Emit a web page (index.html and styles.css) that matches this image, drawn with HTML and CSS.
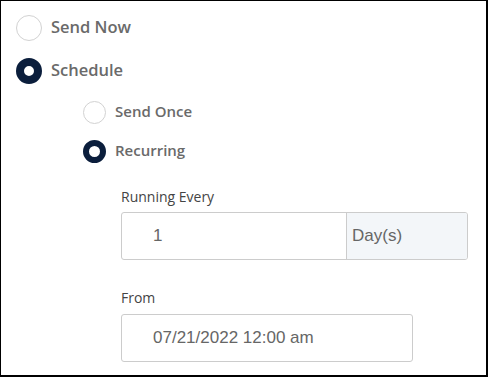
FILE: index.html
```html
<!DOCTYPE html>
<html lang="en">
<head>
<meta charset="utf-8">
<title>Schedule</title>
<link rel="stylesheet" href="styles.css">
</head>
<body>
<div class="frame">
  <div class="options">
    <label class="option">
      <span class="radio"></span>
      <span class="option-text">Send Now</span>
    </label>
    <label class="option">
      <span class="radio checked"></span>
      <span class="option-text">Schedule</span>
    </label>
  </div>
  <div class="sub-options">
    <label class="option small">
      <span class="radio"></span>
      <span class="option-text">Send Once</span>
    </label>
    <label class="option small">
      <span class="radio checked"></span>
      <span class="option-text">Recurring</span>
    </label>
  </div>
  <div class="fields">
    <div class="field-label">Running Every</div>
    <div class="input-group">
      <div class="input-value">1</div>
      <div class="addon">Day(s)</div>
    </div>
    <div class="field-label from">From</div>
    <div class="input-single">
      <div class="input-value">07/21/2022 12:00 am</div>
    </div>
  </div>
</div>
</body>
</html>
```

FILE: styles.css
```css
html, body {
  margin: 0;
  padding: 0;
  background: #ffffff;
}

.frame {
  box-sizing: border-box;
  width: 488px;
  height: 377px;
  border: 1px solid #000000;
  border-right-width: 2px;
  border-bottom-width: 2px;
  padding: 14px 0 0 15px;
  font-family: "Open Sans", "Noto Sans", sans-serif;
  color: #666666;
}

.options {
  display: flex;
  flex-direction: column;
  gap: 17px;
}

.option {
  display: flex;
  align-items: center;
  gap: 9px;
  height: 26px;
}

.radio {
  box-sizing: border-box;
  flex: none;
  width: 26px;
  height: 26px;
  border-radius: 50%;
  border: 1px solid #d2d2d2;
  background: #ffffff;
}

.radio.checked {
  border: 8px solid #0b1e3c;
}

.option-text {
  font-size: 16.5px;
  font-weight: 600;
  line-height: 22px;
  padding-bottom: 3px;
  color: #6a6a6a;
}

.sub-options {
  display: flex;
  flex-direction: column;
  gap: 16px;
  margin: 17px 0 0 67px;
}

.option.small {
  height: 23px;
}

.option.small .radio {
  width: 23px;
  height: 23px;
}

.option.small .radio.checked {
  border-width: 6.5px;
}

.option.small .option-text {
  font-size: 15px;
  line-height: 20px;
}

.fields {
  margin: 24px 0 0 105px;
}

.field-label {
  font-size: 14px;
  line-height: 20px;
  color: #444444;
  margin-bottom: 5px;
}

.field-label.from {
  margin-top: 28px;
  margin-bottom: 6px;
}

.input-group,
.input-single {
  box-sizing: border-box;
  display: flex;
  height: 48px;
  border: 1px solid #cccccc;
  border-radius: 3px;
  font-family: "Liberation Sans", Arial, sans-serif;
  font-size: 17px;
  color: #666666;
}

.input-group {
  width: 347px;
}

.input-single {
  width: 292px;
}

.input-value {
  flex: 1;
  display: flex;
  align-items: center;
  padding-left: 31px;
}

.addon {
  box-sizing: border-box;
  width: 121px;
  display: flex;
  align-items: center;
  padding-left: 5px;
  border-left: 1px solid #cccccc;
  background: #f3f6f9;
  border-radius: 0 2px 2px 0;
}
```
